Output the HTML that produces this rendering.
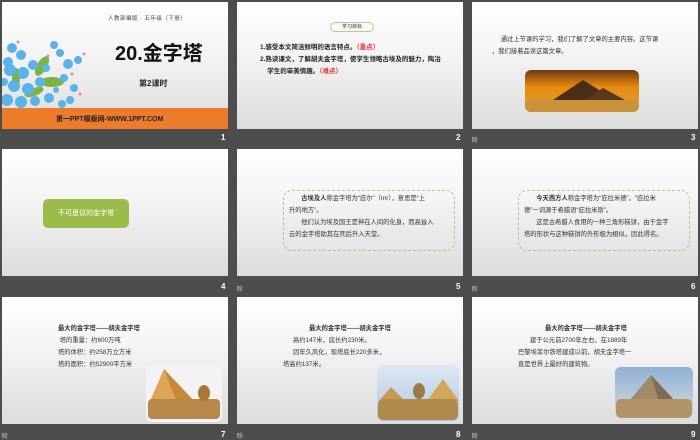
<!DOCTYPE html>
<html><head><meta charset="utf-8"><style>
*{margin:0;padding:0;box-sizing:border-box}
body{width:700px;height:438px;background:#4d4d4d;position:relative;overflow:hidden;font-family:"Liberation Sans","Noto Sans CJK SC",sans-serif;color:#222}
.s{position:absolute;width:226px;height:127px;background:linear-gradient(#fff 0%,#f4f4f4 40%,#dcdcdc 100%);overflow:hidden}
.a{position:absolute;white-space:nowrap}
.n{position:absolute;color:#fff;font-size:8px;font-weight:bold}
.j{position:absolute;color:#ddd;font-size:6px}
.t{font-size:6.3px;line-height:12px;color:#333}
.box{position:absolute;left:46px;top:41px;width:172px;height:61px;border:1.3px dashed #b5c97a;border-radius:9px}
</style></head><body>

<!-- slide 1 -->
<div class="s" style="left:2px;top:2px">
 <div class="a" style="left:106px;top:12px;font-size:5.5px;color:#444;letter-spacing:0.5px">人教部编版 · 五年级（下册）</div>
 <div class="a" style="left:113px;top:35px;font-size:20px;font-weight:bold;color:#111">20.金字塔</div>
 <div class="a" style="left:137px;top:76px;font-size:8px;font-weight:bold;color:#222">第2课时</div>
 <svg class="a" style="left:0;top:36px" width="90" height="72">
  <g fill="#7cb342"><ellipse cx="40" cy="28" rx="5" ry="11" transform="rotate(30 40 28)"/><ellipse cx="50" cy="44" rx="12" ry="5"/><ellipse cx="14" cy="40" rx="4" ry="10"/><ellipse cx="32" cy="54" rx="10" ry="4" transform="rotate(-20 32 54)"/></g>
  <g fill="#5ab2e8">
   <circle cx="10" cy="10" r="5"/><circle cx="19" cy="17" r="5"/><circle cx="6" cy="24" r="5"/><circle cx="8" cy="32" r="6"/><circle cx="21" cy="35" r="6"/><circle cx="31" cy="27" r="5"/><circle cx="12" cy="48" r="6"/><circle cx="26" cy="51" r="6"/><circle cx="38" cy="44" r="5"/><circle cx="5" cy="62" r="6"/><circle cx="19" cy="64" r="6"/><circle cx="33" cy="63" r="5"/><circle cx="47" cy="60" r="5"/><circle cx="52" cy="7" r="4"/><circle cx="58" cy="15" r="4"/><circle cx="66" cy="26" r="5"/><circle cx="76" cy="22" r="4"/><circle cx="62" cy="40" r="4"/><circle cx="72" cy="50" r="4"/><circle cx="60" cy="66" r="4"/><circle cx="44" cy="30" r="4"/><circle cx="68" cy="62" r="4"/><circle cx="2" cy="44" r="4"/><circle cx="54" cy="52" r="3"/>
  </g>
  <g fill="#e68aa0"><circle cx="16" cy="4" r="1.5"/><circle cx="82" cy="16" r="1.5"/><circle cx="70" cy="36" r="1.5"/><circle cx="78" cy="56" r="1.5"/><circle cx="46" cy="18" r="1.5"/></g>
 </svg>
 <div class="a" style="left:0;top:106px;width:226px;height:22px;background:#ec7b2a"></div>
 <div class="a" style="left:54px;top:112px;font-size:7px;font-weight:bold;color:#222">第一PPT模板网-WWW.1PPT.COM</div>
</div>
<div class="n" style="left:221px;top:133px">1</div>

<!-- slide 2 -->
<div class="s" style="left:237px;top:2px">
 <div class="a" style="left:93px;top:20px;width:44px;height:10px;border:1px solid #b6cc82;border-radius:5px;font-size:5px;text-align:center;line-height:8px;color:#333">学习目标</div>
 <div class="a" style="left:23px;top:40px;font-size:6.5px;font-weight:bold;line-height:12px">1.感受本文简洁鲜明的语言特点。<span style="color:#e03030">（重点）</span><br>2.熟读课文，了解胡夫金字塔，使学生领略古埃及的魅力，陶冶<br>&nbsp;&nbsp;&nbsp;&nbsp;学生的审美情趣。<span style="color:#e03030">（难点）</span></div>
</div>
<div class="n" style="left:456px;top:133px">2</div>

<!-- slide 3 -->
<div class="s" style="left:472px;top:2px">
 <div class="a t" style="left:20px;top:32px">&nbsp;&nbsp;&nbsp;&nbsp;&nbsp;通过上节课的学习，我们了解了文章的主要内容。这节课<br>，我们接着品读这篇文章。</div>
 <svg class="a" style="left:53px;top:68px" width="114" height="42"><defs><linearGradient id="g3" x1="0" y1="0" x2="0" y2="1"><stop offset="0" stop-color="#6b3a10"/><stop offset="0.4" stop-color="#e98a10"/><stop offset="1" stop-color="#d8a040"/></linearGradient></defs><rect width="114" height="42" rx="6" fill="url(#g3)"/><polygon points="28,30 58,10 90,30" fill="#4a2e18"/><polygon points="60,30 78,18 100,30" fill="#5a3a1e"/><rect y="30" width="114" height="12" rx="6" fill="#c9913a"/></svg>
</div>
<div class="j" style="left:472px;top:135px">阶</div>
<div class="n" style="left:691px;top:133px">3</div>

<!-- slide 4 -->
<div class="s" style="left:2px;top:149px">
 <div class="a" style="left:41px;top:50px;width:86px;height:29px;background:#9bbb4a;border-radius:5px;color:#fff;font-size:7px;text-align:center;line-height:29px">不可思议的金字塔</div>
</div>
<div class="n" style="left:221px;top:282px">4</div>

<!-- slide 5 -->
<div class="s" style="left:237px;top:149px">
 <div class="box"></div>
 <div class="a t" style="left:52px;top:44px">&nbsp;&nbsp;&nbsp;&nbsp;&nbsp;&nbsp;&nbsp;<b>古埃及人</b>称金字塔为“庇尔”（mr），意思是“上<br>升的地方”。<br>&nbsp;&nbsp;&nbsp;&nbsp;&nbsp;&nbsp;&nbsp;他们认为埃及国王是神在人间的化身，而高耸入<br>云的金字塔助其在死后升入天堂。</div>
</div>
<div class="j" style="left:237px;top:284px">阶</div>
<div class="n" style="left:456px;top:282px">5</div>

<!-- slide 6 -->
<div class="s" style="left:472px;top:149px">
 <div class="box"></div>
 <div class="a t" style="left:52px;top:44px">&nbsp;&nbsp;&nbsp;&nbsp;&nbsp;&nbsp;&nbsp;<b>今天西方人</b>称金字塔为“庇拉米德”。“庇拉米<br>德”一词源于希腊语“庇拉米斯”。<br>&nbsp;&nbsp;&nbsp;&nbsp;&nbsp;&nbsp;&nbsp;这是古希腊人食用的一种三角形糕饼，由于金字<br>塔的形状与这种糕饼的外形极为相似，因此得名。</div>
</div>
<div class="j" style="left:472px;top:284px">阶</div>
<div class="n" style="left:691px;top:282px">6</div>

<!-- slide 7 -->
<div class="s" style="left:2px;top:297px">
 <div class="a t" style="left:56px;top:26px"><b>最大的金字塔——胡夫金字塔</b><br>&nbsp;塔的重量：约600万吨<br>塔的体积：约258万立方米<br>塔的面积：约52900平方米</div>
 <svg class="a" style="left:144px;top:68px" width="76" height="57"><rect width="76" height="57" rx="6" fill="#f4f2f4"/><polygon points="4,36 18,4 48,36" fill="#dca656"/><polygon points="18,4 48,36 30,36" fill="#c88a3a"/><rect x="2" y="34" width="72" height="20" rx="4" fill="#b88848"/><ellipse cx="58" cy="28" rx="6" ry="8" fill="#a87838"/></svg>
</div>
<div class="j" style="left:2px;top:431px">阶</div>
<div class="n" style="left:221px;top:430px">7</div>

<!-- slide 8 -->
<div class="s" style="left:237px;top:297px">
 <div class="a t" style="left:0;top:26px;width:226px"><div style="padding-left:72px"><b>最大的金字塔——胡夫金字塔</b></div><div style="padding-left:56px">高约147米，底长约230米。</div><div style="padding-left:56px">因年久风化，现塔底长220多米，</div><div style="padding-left:46px">塔高约137米。</div></div>
 <svg class="a" style="left:140px;top:68px" width="82" height="56"><defs><linearGradient id="g8" x1="0" y1="0" x2="0" y2="1"><stop offset="0" stop-color="#dfe8f4"/><stop offset="1" stop-color="#aec6e0"/></linearGradient></defs><rect width="82" height="56" rx="6" fill="url(#g8)"/><polygon points="2,36 14,22 28,36" fill="#c99a4e"/><polygon points="50,36 66,14 82,36" fill="#d4a658"/><ellipse cx="42" cy="26" rx="6" ry="8" fill="#9c7a48"/><rect x="1" y="34" width="80" height="21" rx="5" fill="#b08a4c"/></svg>
</div>
<div class="j" style="left:237px;top:431px">阶</div>
<div class="n" style="left:456px;top:430px">8</div>

<!-- slide 9 -->
<div class="s" style="left:472px;top:297px">
 <div class="a t" style="left:0;top:26px;width:226px"><div style="padding-left:73px"><b>最大的金字塔——胡夫金字塔</b></div><div style="padding-left:58px">建于公元前2700年左右，在1889年</div><div style="padding-left:46px">巴黎埃菲尔铁塔建成以前，胡夫金字塔一</div><div style="padding-left:46px">直是世界上最好的建筑物。</div></div>
 <svg class="a" style="left:143px;top:70px" width="78" height="52"><defs><linearGradient id="g9" x1="0" y1="0" x2="0" y2="1"><stop offset="0" stop-color="#8fb0d4"/><stop offset="1" stop-color="#d8dcdc"/></linearGradient></defs><rect width="78" height="52" rx="6" fill="url(#g9)"/><polygon points="14,34 36,8 60,34" fill="#a08a6a"/><polygon points="36,8 60,34 44,34" fill="#806c54"/><rect x="1" y="32" width="76" height="19" rx="5" fill="#b09468"/></svg>
</div>
<div class="j" style="left:472px;top:431px">阶</div>
<div class="n" style="left:691px;top:430px">9</div>

</body></html>
